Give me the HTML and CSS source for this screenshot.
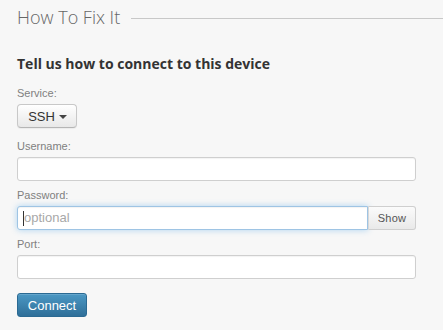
FILE: index.html
```html
<!DOCTYPE html>
<html>
<head>
<meta charset="utf-8">
<link rel="stylesheet" href="styles.css">
</head>
<body>
<div class="page">
  <div class="legend">
    <span class="legend-text">How To Fix It</span>
    <span class="legend-line"></span>
  </div>
  <form class="form">
    <h3 class="form-title">Tell us how to connect to this device</h3>
    <div class="field field-service">
      <label class="label">Service:</label>
      <button type="button" class="btn-select">SSH <span class="caret"></span></button>
    </div>
    <div class="field">
      <label class="label">Username:</label>
      <input class="input" type="text">
    </div>
    <div class="field">
      <label class="label">Password:</label>
      <div class="input-group">
        <div class="input input-focus"><span class="cursor"></span><span class="placeholder">optional</span></div>
        <button type="button" class="btn-show">Show</button>
      </div>
    </div>
    <div class="field">
      <label class="label">Port:</label>
      <input class="input" type="text">
    </div>
    <button type="button" class="btn-primary">Connect</button>
  </form>
</div>
</body>
</html>
```

FILE: styles.css
```css
html, body {
  margin: 0;
  padding: 0;
  background: #f7f7f7;
}
.page {
  padding: 5px 0 0 17px;
  font-family: "Liberation Sans", Arial, sans-serif;
}
.legend {
  display: flex;
  align-items: center;
  height: 24px;
}
.legend-text {
  font-family: "Open Sans", sans-serif;
  font-weight: 300;
  font-size: 18px;
  line-height: 24px;
  color: #666;
  white-space: nowrap;
}
.legend-line {
  flex: 1;
  height: 1px;
  margin: 3px 0 0 11px;
  background: #c8c8c8;
}
.form {
  width: 399px;
  margin: 0;
}
.form-title {
  font-family: "Open Sans", sans-serif;
  font-weight: 700;
  font-size: 14px;
  line-height: 20px;
  color: #333;
  margin: 25px 0 12px;
}
.field {
  display: flex;
  flex-direction: column;
  align-items: flex-start;
  margin-bottom: 7px;
}
.field-service {
  margin-bottom: 11px;
}
.label {
  font-size: 11px;
  line-height: 14px;
  color: #808080;
  margin-bottom: 4px;
}
.btn-select {
  height: 24px;
  width: 60px;
  padding: 0 0 0 1px;
  border: 1px solid #c8c8c8;
  border-bottom-color: #b5b5b5;
  border-radius: 4px;
  background: linear-gradient(#ffffff, #e8e8e8);
  box-shadow: inset 0 1px 0 rgba(255,255,255,.6), 0 1px 1px rgba(0,0,0,.05);
  font-family: "Liberation Sans", Arial, sans-serif;
  font-size: 13px;
  color: #333;
  display: flex;
  align-items: center;
  justify-content: center;
  gap: 4px;
}
.caret {
  width: 0;
  height: 0;
  border-left: 4px solid transparent;
  border-right: 4px solid transparent;
  border-top: 4px solid #444;
  margin-top: 1px;
}
.input {
  box-sizing: border-box;
  width: 399px;
  height: 24px;
  border: 1px solid #cfcfcf;
  border-radius: 3px;
  background: #fff;
  box-shadow: inset 0 1px 1px rgba(0,0,0,.05);
  margin: 0;
  padding: 0 5px;
  font-size: 13px;
}
.input-group {
  display: flex;
  width: 399px;
}
.input-focus {
  width: auto;
  flex: 1;
  display: flex;
  align-items: center;
  border-color: #9ec4e4;
  border-radius: 3px 0 0 3px;
  box-shadow: inset 0 1px 1px rgba(0,0,0,.05), 0 0 6px rgba(82,168,236,.45);
}
.cursor {
  width: 1px;
  height: 15px;
  background: #333;
}
.placeholder {
  color: #a8a8a8;
  font-size: 13px;
  line-height: 22px;
}
.btn-show {
  box-sizing: border-box;
  width: 48px;
  height: 24px;
  margin: 0;
  padding: 0;
  border: 1px solid #cfcfcf;
  border-left: 1px solid #d8d8d8;
  border-radius: 0 3px 3px 0;
  background: linear-gradient(#fbfbfb, #e9e9e9);
  font-family: "Liberation Sans", Arial, sans-serif;
  font-size: 11px;
  letter-spacing: 0.3px;
  color: #555;
}
.btn-primary {
  margin-top: 7px;
  box-sizing: border-box;
  width: 70px;
  height: 24px;
  padding: 0;
  border: 1px solid #2b6a93;
  border-radius: 3px;
  background: linear-gradient(#4b98c4, #2f6f99);
  box-shadow: inset 0 1px 0 rgba(255,255,255,.15);
  font-family: "Liberation Sans", Arial, sans-serif;
  font-size: 13px;
  color: #fff;
}
```
